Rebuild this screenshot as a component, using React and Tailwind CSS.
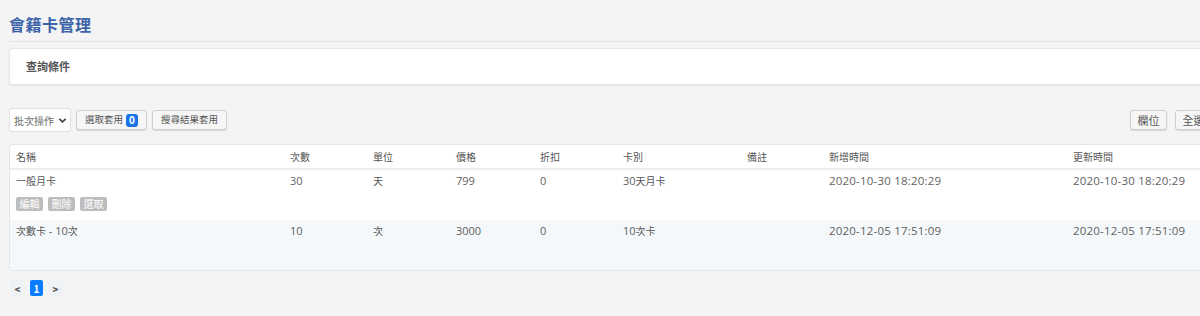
const cols = "grid grid-cols-[274px_83px_83px_84px_83px_124px_82px_244px_1fr]";

const rows = [
  {
    name: "一般月卡",
    times: "30",
    unit: "天",
    price: "799",
    discount: "0",
    type: "30天月卡",
    note: "",
    created: "2020-10-30 18:20:29",
    updated: "2020-10-30 18:20:29",
    actions: true,
  },
  {
    name: "次數卡 - 10次",
    times: "10",
    unit: "次",
    price: "3000",
    discount: "0",
    type: "10次卡",
    note: "",
    created: "2020-12-05 17:51:09",
    updated: "2020-12-05 17:51:09",
    actions: false,
  },
];

function Btn({ children, className = "" }) {
  return (
    <button
      className={`h-[20px] px-[8px] bg-[#f6f6f6] border border-[#cfcfcf] rounded-[3px] shadow-[0_1px_1px_rgba(0,0,0,0.12)] text-[9.5px] text-[#555] flex items-center gap-[3px] leading-none whitespace-nowrap ${className}`}
    >
      {children}
    </button>
  );
}

const num = "font-['Open_Sans','Noto_Sans_CJK_TC',sans-serif] text-[#5f5f5f]";

export default function App() {
  return (
    <div className="w-[1200px] h-[316px] overflow-hidden bg-[#f4f4f4] font-['Noto_Sans_CJK_TC','Noto_Sans',sans-serif] text-[#555]">
      <div className="w-[1240px] pl-[9px]">
        <h1 className="pt-[11px] h-[41px] text-[16px] font-bold text-[#3b63a8] leading-[26px] tracking-[0.5px]">
          會籍卡管理
        </h1>
        <div className="border-t border-[#e2e2e2]" />
        <div className="mt-[6px] h-[37px] bg-white border border-[#e6e6e6] rounded-[3px] shadow-[0_1px_2px_rgba(0,0,0,0.08)] flex items-center pl-[16px]">
          <span className="text-[11px] font-bold text-[#555]">查詢條件</span>
        </div>

        <div className="mt-[23px] flex items-center justify-between pr-[28px]">
          <div className="flex items-center gap-[5px]">
            <div className="h-[24px] w-[62px] bg-white border border-[#e0e0e0] rounded-[3px] flex items-center justify-between pl-[4px] pr-[3px] text-[10px] text-[#666] whitespace-nowrap">
              <span>批次操作</span>
              <svg width="9" height="9" viewBox="0 0 10 10">
                <path d="M1.5 3.2 L5 6.6 L8.5 3.2" fill="none" stroke="#444" strokeWidth="1.8" />
              </svg>
            </div>
            <Btn>
              選取套用
              <span className="bg-[#1a73e8] text-white text-[10px] font-bold rounded-[3px] px-[3px] h-[13px] flex items-center">0</span>
            </Btn>
            <Btn>搜尋結果套用</Btn>
          </div>
          <div className="flex items-center gap-[8px]">
            <Btn className="w-[37px] justify-center px-0 text-[11px]">欄位</Btn>
            <Btn className="w-[37px] justify-center px-0 text-[11px]">全選</Btn>
          </div>
        </div>

        <div className="mt-[12px] bg-white border border-[#e6e6e6] rounded-[3px] text-[#555]">
          <div className={`${cols} text-[10px] h-[25px] items-center pl-[6px] border-b-2 border-[#eeeeee]`}>
            <span>名稱</span>
            <span>次數</span>
            <span>單位</span>
            <span>價格</span>
            <span>折扣</span>
            <span>卡別</span>
            <span>備註</span>
            <span>新增時間</span>
            <span>更新時間</span>
          </div>
          {rows.map((r, i) => (
            <div
              key={i}
              className={`${cols} pl-[6px] pt-[3px] h-[50px] ${i % 2 === 1 ? "bg-[#f5f8fa]" : "bg-white"}`}
            >
              <div>
                <div className="leading-[16px] text-[10px]">
                  {r.name.split(/(\d+| - )/).map((p, k) =>
                    /\d| - /.test(p) ? (
                      <span key={k} className={`${num} text-[11px]`}>{p}</span>
                    ) : (
                      <span key={k}>{p}</span>
                    )
                  )}
                </div>
                {r.actions && (
                  <div className="mt-[8px] flex gap-[5px]">
                    {["編輯", "刪除", "選取"].map((a) => (
                      <span
                        key={a}
                        className="h-[14px] w-[27px] bg-[#bdbdbd] text-white text-[10px] rounded-[2px] flex items-center justify-center leading-none"
                      >
                        {a}
                      </span>
                    ))}
                  </div>
                )}
              </div>
              <span className={`leading-[16px] ${num} text-[11px]`}>{r.times}</span>
              <span className="leading-[16px] text-[10px]">{r.unit}</span>
              <span className={`leading-[16px] ${num} text-[11px]`}>{r.price}</span>
              <span className={`leading-[16px] ${num} text-[11px]`}>{r.discount}</span>
              <span className="leading-[16px] text-[10px]">
                <span className={`${num} text-[11px]`}>{r.type.match(/^\d+/)[0]}</span>
                {r.type.replace(/^\d+/, "")}
              </span>
              <span className="leading-[16px] text-[10px]">{r.note}</span>
              <span className={`leading-[16px] ${num} text-[11.5px] tracking-[0.2px]`}>{r.created}</span>
              <span className={`leading-[16px] ${num} text-[11.5px] tracking-[0.2px]`}>{r.updated}</span>
            </div>
          ))}
        </div>

        <div className="mt-[9px] flex items-center gap-[5px] pl-[1px]">
          <span className="w-[15px] h-[16px] bg-[#eef2f5] rounded-[2px] flex items-center justify-center text-[10px] font-bold text-[#444]">&lt;</span>
          <span className="w-[13px] h-[16px] bg-[#0a7cff] rounded-[2px] flex items-center justify-center text-[10px] font-bold text-white">1</span>
          <span className="w-[15px] h-[16px] bg-[#eef2f5] rounded-[2px] flex items-center justify-center text-[10px] font-bold text-[#444]">&gt;</span>
        </div>
      </div>
    </div>
  );
}
